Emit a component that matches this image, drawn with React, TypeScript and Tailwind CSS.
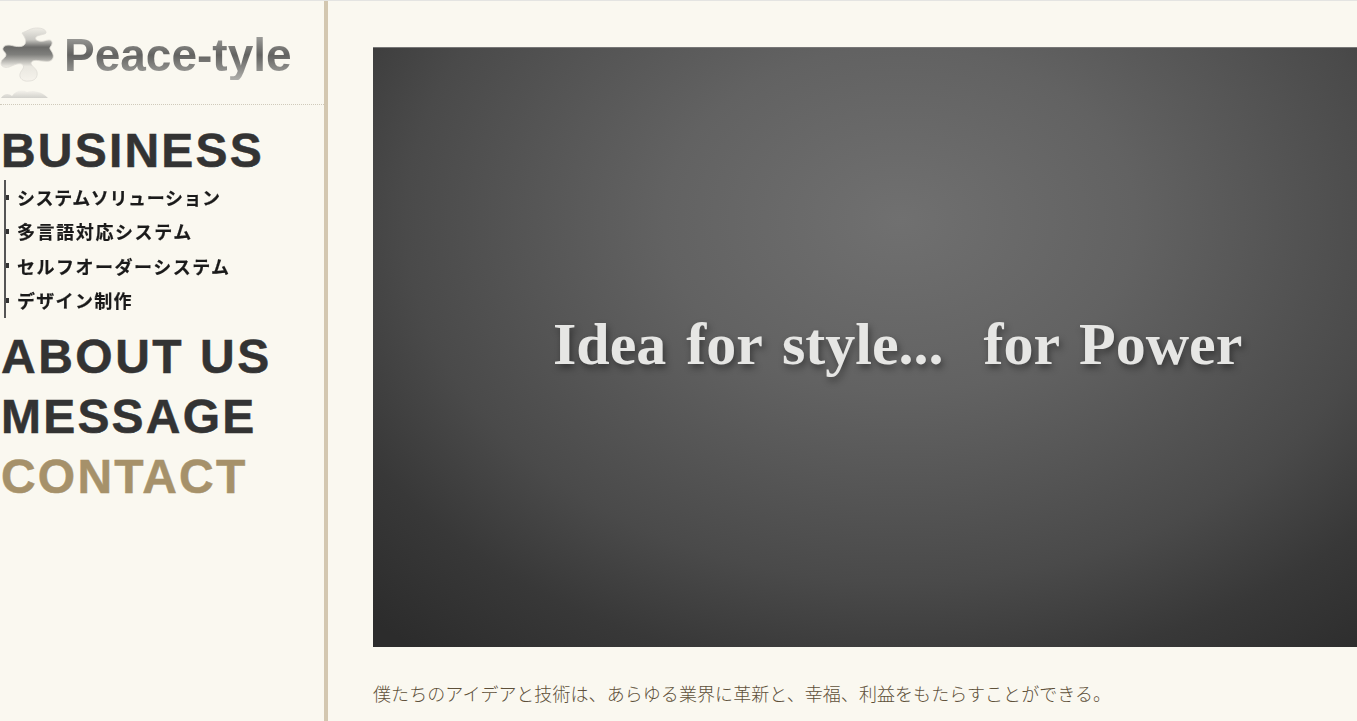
export default function App() {
  const sub = [
    { t: "システムソリューション", c: "tracking-[0.6px]" },
    { t: "多言語対応システム", c: "tracking-[1.6px]" },
    { t: "セルフオーダーシステム", c: "tracking-[1.5px]" },
    { t: "デザイン制作", c: "tracking-[1.3px]" },
  ];
  return (
    <div className="h-[721px] overflow-hidden bg-[#faf8f0] font-['Liberation_Sans',sans-serif]">
      <div className="h-px bg-[#e4e4e2]" />
      <div className="flex h-[720px]">
        <aside className="w-[324px] shrink-0">
          <div className="flex h-[104px] items-start border-b border-dotted border-[#cfcabb] pt-[26px]">
            <svg width="56" height="72" viewBox="0 0 56 72" className="shrink-0 blur-[0.5px]">
              <defs>
                <linearGradient id="pz" x1="0" y1="0" x2="0" y2="1">
                  <stop offset="0" stopColor="#efede6" />
                  <stop offset="0.22" stopColor="#c9c8c3" />
                  <stop offset="0.36" stopColor="#6a6a68" />
                  <stop offset="0.5" stopColor="#7f7f7c" />
                  <stop offset="0.72" stopColor="#e9e7e0" />
                  <stop offset="1" stopColor="#f6f3ec" />
                </linearGradient>
                <linearGradient id="pz2" x1="0" y1="0" x2="0" y2="1">
                  <stop offset="0" stopColor="#f5f3ec" />
                  <stop offset="1" stopColor="#d2d1cc" />
                </linearGradient>
              </defs>
              <path
                d="M31 2c6-2 14-1 15 3 1 3-7 2-10 5-2 3 3 5 8 4 4-1 7-2 8 1 1 3-3 5-2 7 2 3 4 6 3 9-2 5-8 3-12 3-5-1-9-1-10 2 0 3 5 5 6 9 1 5-2 9-8 9-6 1-10-3-9-7 1-4 5-6 3-9-3-3-9 0-14 2-4 1-8 0-8-4 0-4 5-5 5-8 0-3-4-4-3-7 2-4 7-3 11-2 5 1 9 1 11-2 2-4-1-8-3-11z"
                fill="url(#pz)"
                stroke="#dedcd5"
                strokeWidth="0.8"
              />
              <path d="M1 71c3-5 8-5 11-2 3-5 10-7 15-4 5-2 14-1 21 6z" fill="url(#pz2)" />
            </svg>
            <span className="ml-[8px] mt-[3px] bg-gradient-to-b from-[#b4b4b0] via-[#626260] to-[#b0b0ac] bg-clip-text text-[46px] leading-[50px] font-bold text-transparent blur-[0.6px]">
              Peace-tyle
            </span>
          </div>
          <nav className="pl-[1px] text-[48px] leading-[60px] font-bold tracking-[2.2px] text-[#333333] [-webkit-text-stroke:0.5px_currentColor]">
            <div className="mt-[16px] h-[59px]">BUSINESS</div>
            <ul className="ml-[3px] h-[138px] w-fit border-l-2 border-[#555555] font-['Noto_Sans_CJK_JP',sans-serif] text-[18px] leading-[34.4px] font-bold text-[#1a1a1a] blur-[0.4px] [-webkit-text-stroke:0.2px_currentColor]">
              {sub.map((s) => (
                <li key={s.t} className={`flex h-[34.4px] items-center ${s.c}`}>
                  <span className="mr-[8px] h-[5px] w-[3px] bg-[#333333]" />
                  {s.t}
                </li>
              ))}
            </ul>
            <div className="mt-[9px] tracking-[2.5px]">ABOUT US</div>
            <div>MESSAGE</div>
            <div className="text-[#a6916a]">CONTACT</div>
          </nav>
        </aside>
        <div className="w-[4px] shrink-0 bg-[#d3c7b0]" />
        <main className="min-w-0 flex-1 overflow-hidden pl-[45px] pt-[46px]">
          <div className="flex h-[600px] w-[1060px] items-center border-t border-[#777777] bg-[radial-gradient(ellipse_760px_557px_at_527px_172px,#707070_0%,#626262_31%,#4a4a4a_65%,#383838_82%,#2c2c2c_100%)] pl-[180px]">
            <span className="mt-[-7px] font-['Liberation_Serif',serif] text-[60px] font-bold [word-spacing:5px] whitespace-pre text-[#e6e6e4] blur-[0.4px] [text-shadow:2px_4px_7px_rgba(0,0,0,0.4)]">
              Idea for style...  for Power
            </span>
          </div>
          <p className="mt-[33px] font-['Noto_Sans_CJK_JP',sans-serif] text-[18px] leading-[26px] font-light tracking-[0.07px] text-[#5e5039]">
            僕たちのアイデアと技術は、あらゆる業界に革新と、幸福、利益をもたらすことができる。
          </p>
        </main>
      </div>
    </div>
  );
}
